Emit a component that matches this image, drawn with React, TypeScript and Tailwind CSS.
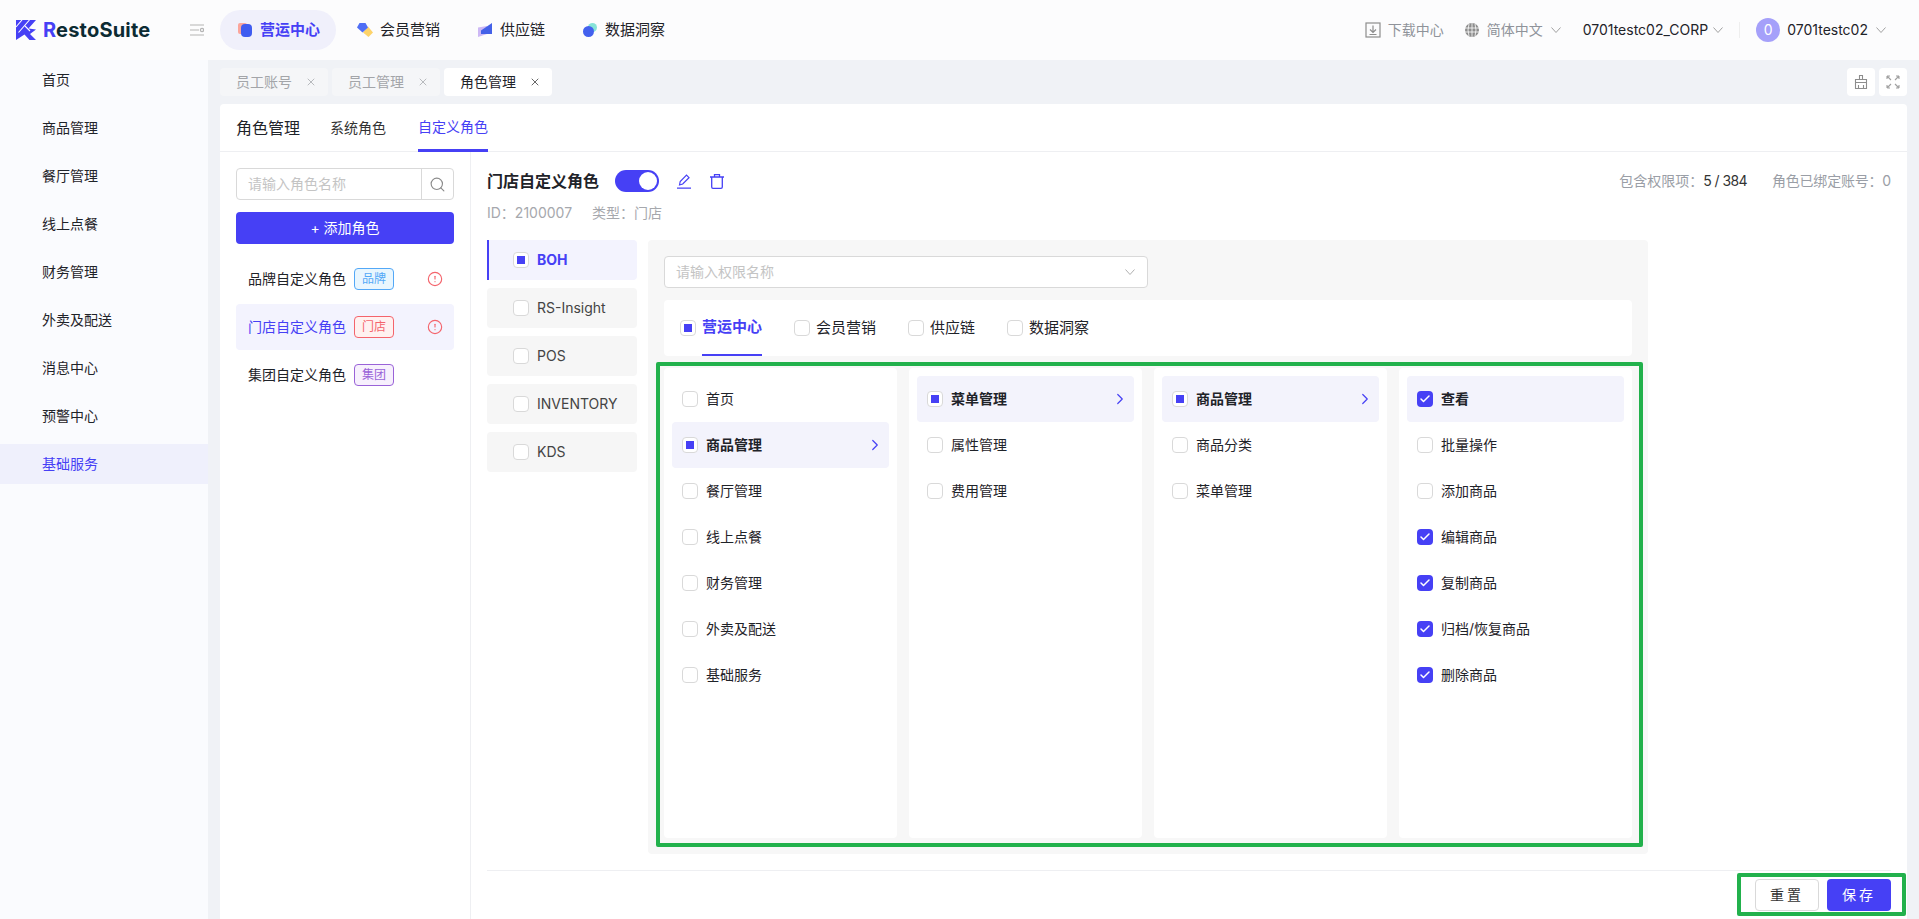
import { ChevronRight, CircleAlert, Search, X, Check } from 'lucide-react';

const sideItems = ['首页', '商品管理', '餐厅管理', '线上点餐', '财务管理', '外卖及配送', '消息中心', '预警中心', '基础服务'];

const col1 = ['首页', '商品管理', '餐厅管理', '线上点餐', '财务管理', '外卖及配送', '基础服务'];
const col2 = ['菜单管理', '属性管理', '费用管理'];
const col3 = ['商品管理', '商品分类', '菜单管理'];
const col4 = [
  { label: '查看', on: true },
  { label: '批量操作', on: false },
  { label: '添加商品', on: false },
  { label: '编辑商品', on: true },
  { label: '复制商品', on: true },
  { label: '归档/恢复商品', on: true },
  { label: '删除商品', on: true },
];

function Chevron({ className }: { className?: string }) {
  return (
    <svg viewBox="0 0 10 6" className={`w-[10px] h-[6px] ${className ?? ''}`} fill="none" stroke="currentColor" strokeWidth="1">
      <path d="M0.5 0.5 5 5.5 9.5 0.5" />
    </svg>
  );
}

function Box({ state }: { state?: 'half' | 'on' }) {
  if (state === 'on') {
    return (
      <span className="w-4 h-4 rounded-[4px] bg-[#4640f5] flex items-center justify-center shrink-0">
        <Check size={12} strokeWidth={3} className="text-white" />
      </span>
    );
  }
  return (
    <span className="w-4 h-4 rounded-[4px] bg-white border border-[#d9d9d9] flex items-center justify-center shrink-0">
      {state === 'half' && <span className="w-2 h-2 bg-[#4640f5]" />}
    </span>
  );
}

function Logo() {
  return (
    <svg viewBox="0 0 20 20" className="w-5 h-5 shrink-0">
      <path d="M0 0H20L12.5 8.5 20 9.5 14 14 20 20H13.5L8.5 14.5 0 20Z" fill="#4640f5" />
      <path d="M6 0 0 7M13.5 0 2.5 12.5M9 6 14 11" fill="none" stroke="#fcfcfd" strokeWidth="1.1" />
    </svg>
  );
}

function OpsIcon() {
  return (
    <svg viewBox="0 0 14 16" className="w-[14px] h-4 shrink-0">
      <rect x="0" y="1" width="9" height="11" rx="2" fill="#fba59b" />
      <rect x="3" y="2" width="11" height="13" rx="4" fill="#3f5cf0" />
    </svg>
  );
}

function MemberIcon() {
  return (
    <svg viewBox="0 0 16 14" className="w-4 h-[14px] shrink-0">
      <path d="M11 3.5 16 9.5 11.5 14 6 9.5Z" fill="#fdd36a" />
      <path d="M2.5 0H8.5L11 4.5 5.5 9.5 0 4.5Z" fill="#4f6ef5" />
    </svg>
  );
}

function SupplyIcon() {
  return (
    <svg viewBox="0 0 14 14" className="w-[14px] h-[14px] shrink-0">
      <path d="M0 4.5 9 3V11L0 14Z" fill="#cdb8f5" />
      <path d="M3 7.5 14 0V11H3Z" fill="#4461e8" />
    </svg>
  );
}

function DataIcon() {
  return (
    <svg viewBox="0 0 14 14" className="w-[14px] h-[14px] shrink-0">
      <circle cx="9.5" cy="4.5" r="4.5" fill="#86e3d8" />
      <circle cx="5.5" cy="8.5" r="5.5" fill="#4361ee" />
    </svg>
  );
}

function TopTab({ label, active }: { label: string; active?: boolean }) {
  return (
    <div className={`w-[108px] h-7 rounded-[4px] flex items-center pl-4 ${active ? 'bg-white text-[#1f2329]' : 'bg-[#f5f6f8] text-[#a3a5a9]'}`}>
      <span className="w-[69px] text-sm">{label}</span>
      <X size={12} strokeWidth={1.5} className={active ? 'text-[#333]' : 'text-[#a3a5a9]'} />
    </div>
  );
}

function Badge({ label, tone }: { label: string; tone: string }) {
  return <span className={`w-10 h-[22px] rounded-[4px] border text-xs flex items-center justify-center ${tone}`}>{label}</span>;
}

function RoleItem({ label, badge, tone, active, alert }: { label: string; badge: string; tone: string; active?: boolean; alert?: boolean }) {
  return (
    <div className={`h-[46px] rounded-[4px] flex items-center pl-3 ${active ? 'bg-[#f3f3fe] text-[#4640f5]' : 'text-[#1f2329]'}`}>
      <span className="w-[106px] text-sm">{label}</span>
      <Badge label={badge} tone={tone} />
      {alert && <CircleAlert size={16} strokeWidth={1.7} className="ml-[33px] text-[#f4646c]" />}
    </div>
  );
}

function Product({ label, state, active, arrow, hot }: { label: string; state?: 'half'; active?: boolean; arrow?: boolean; hot?: boolean }) {
  return (
    <div className={`h-[46px] rounded-[4px] flex items-center pl-[10px] pr-[5px] gap-2 ${active ? 'bg-[#f3f3fc]' : ''}`}>
      <Box state={state} />
      <span className={`text-sm text-[#1f2329] ${hot ? 'font-semibold' : ''}`}>{label}</span>
      {arrow && <ChevronRight size={18} strokeWidth={1.6} className="ml-auto text-[#4640f5]" />}
    </div>
  );
}

function Column({ children }: { children: React.ReactNode }) {
  return <div className="bg-white rounded-[4px] p-2 h-[470px]">{children}</div>;
}

function ProductTab({ label, active, width }: { label: string; active?: boolean; width: string }) {
  return (
    <div className={`h-14 flex items-center gap-[6px] ${width}`}>
      <Box state={active ? 'half' : undefined} />
      <span className={`h-14 flex items-center text-[15px] ${active ? 'font-semibold text-[#4640f5] border-b-2 border-[#4640f5]' : 'text-[#1f2329]'}`}>{label}</span>
    </div>
  );
}

export default function App() {
  return (
    <div className="relative w-[1919px] h-[919px] overflow-hidden flex flex-col font-['Inter','Noto_Sans_CJK_SC',sans-serif] text-[#1f2329]">
      {/* Header */}
      <header className="h-[60px] bg-[#fcfcfd] flex items-center shrink-0">
        <div className="w-[190px] pl-4 flex items-center gap-[7px]">
          <Logo />
          <span className="text-[20px] font-bold tracking-[0.2px] text-[#0c2b33]"><span className="text-[#4640f5]">R</span>estoSuite</span>
        </div>
        <svg viewBox="0 0 14 12" className="w-[14px] h-3 text-[#b4b4b4]" fill="none" stroke="currentColor" strokeWidth="1.2">
          <path d="M0 1H14M0 6H9M0 11H14" />
          <circle cx="12" cy="6" r="1.6" />
        </svg>
        <nav className="ml-4 flex items-center">
          <div className="w-[116px] h-10 rounded-full bg-[#f0f0fb] flex items-center pl-[18px] gap-2 font-semibold text-[#4640f5] text-[15px]">
            <OpsIcon />
            <span>营运中心</span>
          </div>
          <div className="ml-[21px] flex items-center gap-[7px] text-[15px]">
            <MemberIcon />
            <span>会员营销</span>
          </div>
          <div className="ml-[38px] flex items-center gap-2 text-[15px]">
            <SupplyIcon />
            <span>供应链</span>
          </div>
          <div className="ml-[38px] flex items-center gap-2 text-[15px]">
            <DataIcon />
            <span>数据洞察</span>
          </div>
        </nav>
        <div className="ml-auto pr-[33px] flex items-center text-sm">
          <svg viewBox="0 0 16 16" className="w-4 h-4 text-[#8d8d8d]" fill="none" stroke="currentColor" strokeWidth="1.2">
            <rect x="1" y="1" width="14" height="14" />
            <path d="M8 3.5V10M5 7.5 8 10.5 11 7.5M4.5 12.5H11.5" />
          </svg>
          <span className="ml-[7px] text-[#8f939a]">下载中心</span>
          <svg viewBox="0 0 14 14" className="ml-[21px] w-[14px] h-[14px]" fill="none" stroke="#fff" strokeWidth="0.8">
            <circle cx="7" cy="7" r="7" fill="#8d8d8d" stroke="none" />
            <path d="M0 5H14M0 9H14M7 0V14M4 1Q2 7 4 13M10 1Q12 7 10 13" />
          </svg>
          <span className="ml-2 text-[#8f939a]">简体中文</span>
          <Chevron className="ml-2 text-[#a0a0a0]" />
          <span className="ml-[22px] text-[#1f2329]">0701testc02_CORP</span>
          <Chevron className="ml-[5px] text-[#a0a0a0]" />
          <span className="ml-4 w-px h-4 bg-[#eeeeee]" />
          <span className="ml-4 w-6 h-6 rounded-full bg-[#a5a0fa] text-white text-sm flex items-center justify-center">0</span>
          <span className="ml-[7px] text-[#1f2329]">0701testc02</span>
          <Chevron className="ml-2 text-[#a0a0a0]" />
        </div>
      </header>

      <div className="flex-1 flex min-h-0">
        {/* Sidebar */}
        <aside className="w-[208px] bg-[#fafbfe] shrink-0 flex flex-col gap-2">
          {sideItems.map((item) => (
            <div key={item} className={`h-10 pl-[42px] flex items-center text-sm ${item === '基础服务' ? 'bg-[#eff0fc] text-[#4640f5]' : 'text-[#1f2329]'}`}>
              {item}
            </div>
          ))}
        </aside>

        {/* Main */}
        <main className="flex-1 min-w-0 bg-[#f0f2f6] px-3 flex flex-col">
          <div className="h-11 pt-2 pb-2 flex gap-1 shrink-0">
            <TopTab label="员工账号" />
            <TopTab label="员工管理" />
            <TopTab label="角色管理" active />
            <div className="ml-auto flex gap-1">
              <div className="w-7 h-7 rounded-[4px] bg-white flex items-center justify-center">
                <svg viewBox="0 0 14 14" className="w-[14px] h-[14px] text-[#8d8d8d]" fill="none" stroke="currentColor" strokeWidth="1.1">
                  <path d="M5.5 0.5H8.5V4.5H5.5ZM1.5 4.5H12.5V7.5H1.5ZM1.5 7.5H12.5V13.5H1.5ZM4.5 10V13.5M9.5 10V13.5" />
                </svg>
              </div>
              <div className="w-7 h-7 rounded-[4px] bg-white flex items-center justify-center">
                <svg viewBox="0 0 14 14" className="w-[14px] h-[14px] text-[#a0a0a0]" fill="none" stroke="currentColor" strokeWidth="1.1">
                  <path d="M1 1 5 5M1 1H4M1 1V4M13 1 9 5M13 1H10M13 1V4M1 13 5 9M1 13H4M1 13V10M13 13 9 9M13 13H10M13 13V10" />
                </svg>
              </div>
            </div>
          </div>

          <div className="flex-1 min-h-0 bg-white rounded-t-[4px] flex flex-col">
            <div className="h-12 pl-4 flex items-end border-b border-[#eeeff2] shrink-0">
              <span className="h-[47px] flex items-center text-base">角色管理</span>
              <span className="ml-[30px] h-[47px] flex items-center text-sm text-[#333]">系统角色</span>
              <span className="ml-8 h-[47px] flex items-center text-sm text-[#4640f5] border-b-[3px] border-[#4640f5] -mb-px">自定义角色</span>
            </div>

            <div className="flex-1 flex min-h-0">
              {/* Role list */}
              <section className="w-[251px] shrink-0 border-r border-[#eeeff2] pl-4 pr-4 pt-4">
                <div className="h-8 rounded-[4px] border border-[#d9d9d9] flex">
                  <span className="flex-1 pl-[11px] flex items-center text-sm text-[#c4c4c4]">请输入角色名称</span>
                  <span className="w-8 border-l border-[#d9d9d9] flex items-center justify-center">
                    <Search size={17} strokeWidth={1.6} className="text-[#8a8a8a]" />
                  </span>
                </div>
                <button className="mt-3 w-full h-8 rounded-[4px] bg-[#4640f5] text-white text-sm">+ 添加角色</button>
                <div className="mt-3 flex flex-col gap-[2px]">
                  <RoleItem label="品牌自定义角色" badge="品牌" tone="border-[#53a8f7] bg-[#e9f6fe] text-[#53a8f7]" alert />
                  <RoleItem label="门店自定义角色" badge="门店" tone="border-[#f4646c] bg-[#fff1f0] text-[#f4646c]" active alert />
                  <RoleItem label="集团自定义角色" badge="集团" tone="border-[#9a63d8] bg-[#f7f0fd] text-[#9a63d8]" />
                </div>
              </section>

              {/* Role detail */}
              <section className="flex-1 min-w-0 pl-4 pr-4">
                <div className="mt-[18px] h-[22px] flex items-center">
                  <span className="w-[128px] text-base font-semibold">门店自定义角色</span>
                  <span className="w-11 h-[22px] rounded-full bg-[#4640f5] flex items-center justify-end pr-[2px]">
                    <span className="w-[18px] h-[18px] rounded-full bg-white" />
                  </span>
                  <svg viewBox="0 0 14 15" className="ml-[18px] w-[14px] h-[15px] text-[#4640f5]" fill="none" stroke="currentColor" strokeWidth="1.2">
                    <path d="M2.5 11 3.2 7.5 9.5 1.2 12 3.7 5.7 10ZM0 14.2H14" />
                  </svg>
                  <svg viewBox="0 0 14 15" className="ml-[19px] w-[14px] h-[15px] text-[#4640f5]" fill="none" stroke="currentColor" strokeWidth="1.3">
                    <path d="M0 3H14M4.5 3V0.7H9.5V3M1.7 3V13A1.3 1.3 0 0 0 3 14.3H11A1.3 1.3 0 0 0 12.3 13V3" />
                  </svg>
                  <span className="ml-auto text-sm text-[#9a9ea6]">包含权限项：<span className="text-[#333] tracking-[-0.6px]">5 / 384</span></span>
                  <span className="ml-[25px] text-sm text-[#9a9ea6] tracking-[-0.2px]">角色已绑定账号：0</span>
                </div>
                <div className="mt-[10px] h-[22px] flex items-center text-sm text-[#a6a8ad]">
                  <span className="w-[105px]">ID：2100007</span>
                  <span>类型：门店</span>
                </div>

                <div className="mt-4 flex gap-[11px]">
                  <div className="w-[150px] flex flex-col gap-2">
                    <div className="h-10 rounded-r-[4px] bg-[#f3f3fe] border-l-2 border-[#4640f5] pl-6 flex items-center gap-2">
                      <Box state="half" />
                      <span className="text-sm font-bold text-[#4640f5]">BOH</span>
                    </div>
                    {['RS-Insight', 'POS', 'INVENTORY', 'KDS'].map((s) => (
                      <div key={s} className="h-10 rounded-[4px] bg-[#f6f6f6] pl-[26px] flex items-center gap-2">
                        <Box />
                        <span className="text-sm text-[#444]">{s}</span>
                      </div>
                    ))}
                  </div>

                  <div className="w-[1000px] h-[614px] rounded-[4px] bg-[#f7f7f7] p-4">
                    <div className="w-[484px] h-8 rounded-[4px] bg-white border border-[#d9d9d9] flex items-center justify-between pl-[11px] pr-3">
                      <span className="text-sm text-[#c4c4c4]">请输入权限名称</span>
                      <Chevron className="text-[#b0b0b0]" />
                    </div>
                    <div className="mt-3 h-14 rounded-[4px] bg-white flex items-center pl-4">
                      <ProductTab label="营运中心" active width="w-[114px]" />
                      <ProductTab label="会员营销" width="w-[114px]" />
                      <ProductTab label="供应链" width="w-[99px]" />
                      <ProductTab label="数据洞察" width="w-[100px]" />
                    </div>
                    <div className="mt-3 grid grid-cols-4 gap-3">
                      <Column>
                        {col1.map((c) => (
                          <Product key={c} label={c} state={c === '商品管理' ? 'half' : undefined} active={c === '商品管理'} arrow={c === '商品管理'} hot={c === '商品管理'} />
                        ))}
                      </Column>
                      <Column>
                        {col2.map((c, i) => (
                          <Product key={c} label={c} state={i === 0 ? 'half' : undefined} active={i === 0} arrow={i === 0} hot={i === 0} />
                        ))}
                      </Column>
                      <Column>
                        {col3.map((c, i) => (
                          <Product key={c} label={c} state={i === 0 ? 'half' : undefined} active={i === 0} arrow={i === 0} hot={i === 0} />
                        ))}
                      </Column>
                      <Column>
                        {col4.map((c, i) => (
                          <div key={c.label} className={`h-[46px] rounded-[4px] flex items-center pl-[10px] gap-2 ${i === 0 ? 'bg-[#f3f3fc]' : ''}`}>
                            <Box state={c.on ? 'on' : undefined} />
                            <span className={`text-sm text-[#1f2329] ${i === 0 ? 'font-semibold' : ''}`}>{c.label}</span>
                          </div>
                        ))}
                      </Column>
                    </div>
                  </div>
                </div>

                <div className="mt-4 border-t border-[#eeeff2] pt-2 flex justify-end gap-2">
                  <button className="w-16 h-8 rounded-[4px] border border-[#d9d9d9] bg-white text-sm tracking-[3px] text-[#333]">重置</button>
                  <button className="w-16 h-8 rounded-[4px] bg-[#4640f5] text-sm tracking-[3px] text-white">保存</button>
                </div>
              </section>
            </div>
          </div>
        </main>
      </div>

      {/* Green annotation boxes */}
      <div className="absolute left-[656px] top-[362px] w-[987px] h-[485px] border-4 border-[#22b14c] rounded-[2px] pointer-events-none" />
      <div className="absolute left-[1737px] top-[873px] w-[169px] h-[43px] border-4 border-[#22b14c] rounded-[2px] pointer-events-none" />
    </div>
  );
}
